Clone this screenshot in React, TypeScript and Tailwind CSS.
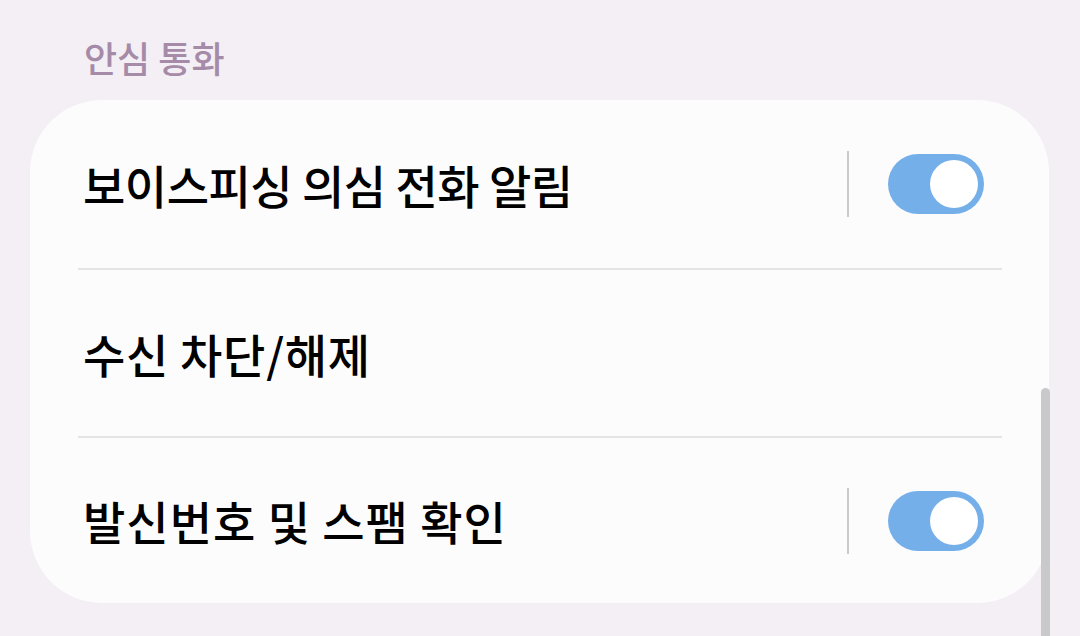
import React from "react";

const font = { fontFamily: '"Noto Sans CJK KR", "Noto Sans", sans-serif' };

function Toggle() {
  return (
    <div className="flex items-center">
      <div className="w-[2px] h-[66px] bg-[#cacaca]" />
      <div className="ml-[39px] w-[96px] h-[60px] rounded-full bg-[#75afea] flex items-center justify-end pr-[6px]">
        <div className="w-[48px] h-[48px] rounded-full bg-white" />
      </div>
    </div>
  );
}

function Divider() {
  return <div className="ml-[48px] w-[924px] h-[2px] bg-[#e4e4e6]" />;
}

export default function App() {
  return (
    <div className="relative w-[1080px] h-[636px] overflow-hidden bg-[#f4eff5]" style={font}>
      <div className="pl-[84px] pt-[33px] h-[100px] text-[36px] leading-[48px] font-medium text-[#a68ba8]">
        안심 통화
      </div>
      <div className="ml-[30px] w-[1019px] h-[503px] bg-[#fcfcfd] rounded-[72px] flex flex-col">
        <div className="h-[168px] flex items-center justify-between pl-[53px] pr-[65px]">
          <span className="text-[46px] font-medium text-black tracking-[-0.5px]">보이스피싱 의심 전화 알림</span>
          <Toggle />
        </div>
        <Divider />
        <div className="h-[166px] flex items-center pl-[53px] pr-[65px]">
          <span className="text-[46px] font-medium text-black tracking-[0.7px]">수신 차단/해제</span>
        </div>
        <Divider />
        <div className="flex-1 flex items-center justify-between pl-[53px] pr-[65px]">
          <span className="text-[46px] font-medium text-black tracking-[1px]">발신번호 및 스팸 확인</span>
          <Toggle />
        </div>
      </div>
      <div className="absolute left-[1041px] top-[388px] w-[9px] h-[260px] rounded-full bg-[#c9c9cc]" />
    </div>
  );
}
